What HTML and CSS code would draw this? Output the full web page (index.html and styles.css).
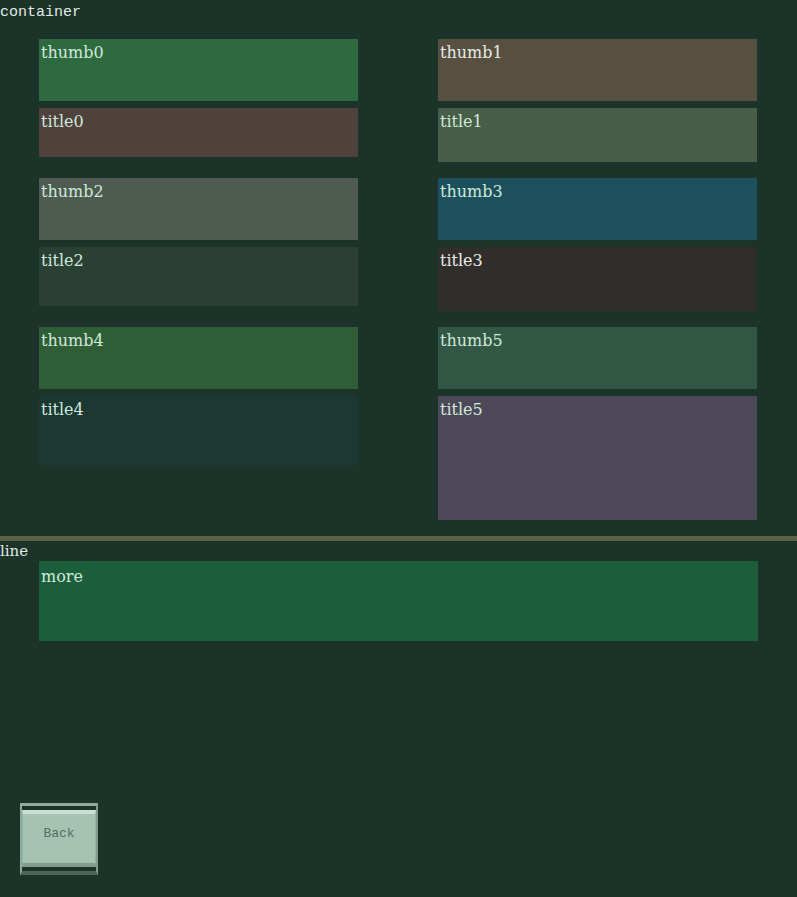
FILE: index.html
```html
<!DOCTYPE html>
<html lang="en">
<head>
    <meta charset="UTF-8" />
    <meta name="viewport" content="width=device-width, initial-scale=1" />
    <title>Container</title>
    <link rel="stylesheet" href="styles.css">
</head>
<body>
    <div class="label label-mono">container</div>
    <div class="container">
        <div class="card">
            <div class="box thumb c-thumb0">thumb0</div>
            <div class="box title c-title0">title0</div>
        </div>
        <div class="card">
            <div class="box thumb c-thumb1">thumb1</div>
            <div class="box title c-title1">title1</div>
        </div>
        <div class="card">
            <div class="box thumb c-thumb2">thumb2</div>
            <div class="box title c-title2">title2</div>
        </div>
        <div class="card">
            <div class="box thumb c-thumb3">thumb3</div>
            <div class="box title c-title3">title3</div>
        </div>
        <div class="card">
            <div class="box thumb c-thumb4">thumb4</div>
            <div class="box title c-title4">title4</div>
        </div>
        <div class="card">
            <div class="box thumb c-thumb5">thumb5</div>
            <div class="box title c-title5">title5</div>
        </div>
    </div>

    <div class="line"></div>
    <div class="label label-serif">line</div>
    <div class="more-wrap">
        <div class="box more">more</div>
    </div>

    <div class="back-wrap">
        <button class="back" type="button">Back</button>
    </div>
</body>
</html>
```

FILE: styles.css
```css
body {
    margin: 0;
    background: #1c3329;
    height: 897px;
    overflow: hidden;
}
.label {
    color: #e2ebe4;
}
.label-mono {
    font-family: "Liberation Mono", monospace;
    font-size: 15px;
    line-height: 16px;
    height: 16px;
    padding-top: 5px;
}
.label-serif {
    font-family: "DejaVu Serif", serif;
    font-size: 15px;
    line-height: 20px;
    height: 20px;
}
.container {
    display: grid;
    grid-template-columns: 319px 319px;
    column-gap: 80px;
    row-gap: 16px;
    align-items: start;
    padding: 18px 0 16px 39px;
}
.card {
    display: flex;
    flex-direction: column;
    gap: 7px;
}
.box {
    box-sizing: border-box;
    padding: 5px 2px;
    font-family: "DejaVu Serif", serif;
    font-size: 16px;
    line-height: 18px;
    color: #cfe9da;
    font-variant-numeric: oldstyle-nums;
}
.thumb { height: 62px; }

.c-thumb0 { background: #2e6a40; }
.c-title0 { background: #4f413b; height: 49px; }
.c-thumb1 { background: #574f40; color: #e6ece6; }
.c-title1 { background: #495e48; height: 54px; }
.c-thumb2 { background: #4f5a50; }
.c-title2 { background: #2b4034; height: 59px; }
.c-thumb3 { background: #1c505c; }
.c-title3 { background: #302e2b; height: 64px; color: #ececec; }
.c-thumb4 { background: #2f5e36; }
.c-title4 { background: #1c3833; height: 69px; }
.c-thumb5 { background: #325744; }
.c-title5 { background: #4d4858; height: 124px; }

.line {
    height: 5px;
    background: #59604a;
}
.more-wrap {
    padding-left: 39px;
}
.more {
    width: 719px;
    height: 80px;
    padding-top: 7px;
    background: #1c5e3b;
}
.back-wrap {
    box-sizing: border-box;
    margin: 162px 0 0 20px;
    width: 78px;
    height: 72px;
    border-style: solid;
    border-width: 3px 2px 4px 2px;
    border-color: #8fab9c #7f9c8e #4a6656 #8fab9c;
    padding: 4px 0;
}
.back {
    display: block;
    box-sizing: border-box;
    width: 100%;
    height: 100%;
    margin: 0;
    background: #a4c3b3;
    border-style: solid;
    border-width: 4px 1px 4px 1px;
    border-color: #c8e0d2 #93b2a2 #7f9c8e #93b2a2;
    font-family: "Liberation Mono", monospace;
    font-size: 13px;
    color: #52705f;
    padding: 0 0 10px 0;
}
```
